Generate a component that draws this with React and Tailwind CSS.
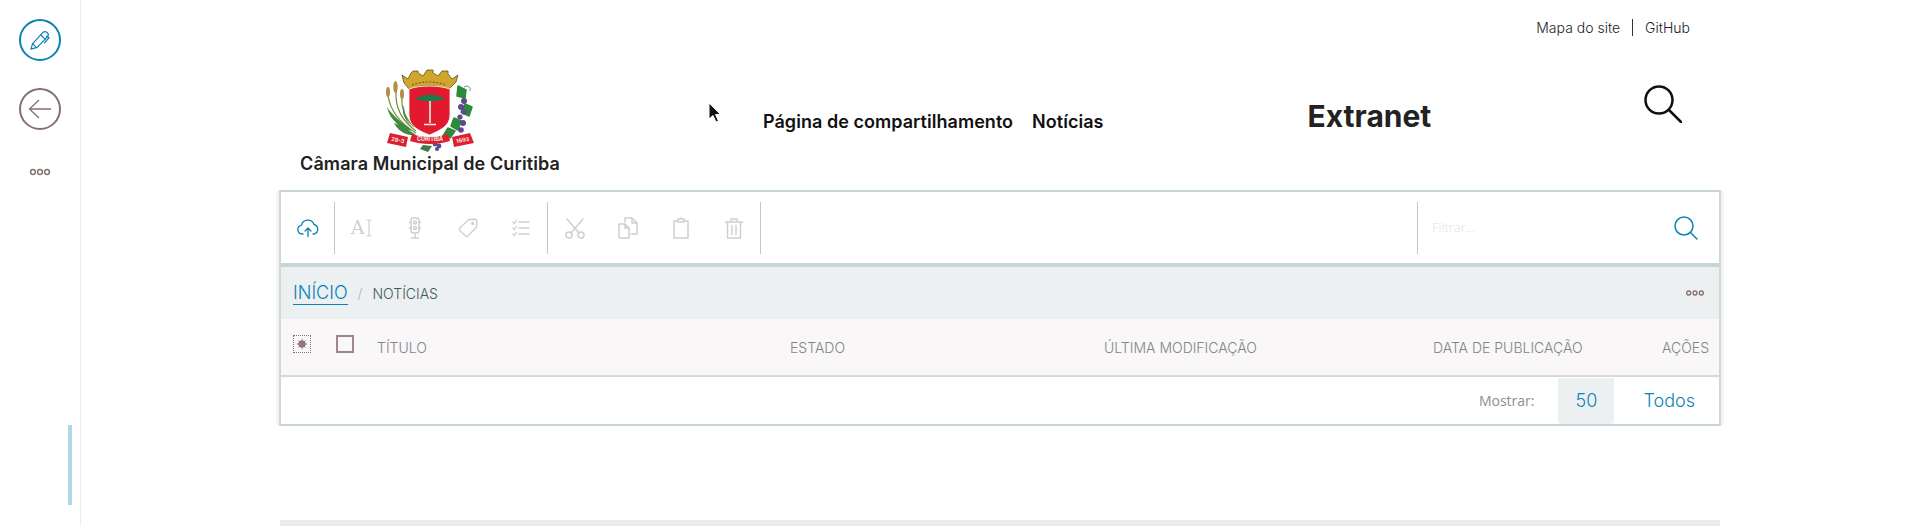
const CINZA = '#cfcfcf';

function Icone({ size = 24, cor = CINZA, sw = 1.5, children, className = '' }) {
  return (
    <svg width={size} height={size} viewBox="0 0 24 24" fill="none" stroke={cor} strokeWidth={sw} strokeLinecap="round" strokeLinejoin="round" className={className}>
      {children}
    </svg>
  );
}

function Pontos({ cor = '#86706f', r = 2.4, w = 20 }) {
  return (
    <svg width={w} height="8" viewBox="0 0 20 8" fill="none" stroke={cor} strokeWidth="1.5">
      <circle cx="3" cy="4" r={r} />
      <circle cx="10" cy="4" r={r} />
      <circle cx="17" cy="4" r={r} />
    </svg>
  );
}

// brasao desenhado a mao, viewBox igual ao recorte de 100x90
function Brasao() {
  return (
    <svg width="100" height="90" viewBox="0 0 100 90">
      {/* trigo */}
      <g stroke="#6f8f3c" strokeWidth="1.2" fill="none">
        <path d="M8 30 C10 46 20 58 36 68" />
        <path d="M16 26 C15 42 22 56 36 66" />
        <path d="M22 32 C21 44 26 54 34 62" />
      </g>
      <g fill="#b08f45">
        <ellipse cx="8" cy="27" rx="2" ry="5" />
        <ellipse cx="15.500" cy="22" rx="2.200" ry="6" />
        <ellipse cx="22" cy="29" rx="2" ry="5" />
      </g>
      <path d="M7 42 C12 50 22 58 33 66 C22 64 10 56 7 42Z M14 58 C20 60 28 64 36 70 C26 71 18 66 14 58Z M24 40 C24 50 28 58 34 64 C28 58 20 50 24 40Z" fill="#3f8a3e" />
      {/* videira */}
      <g fill="#2c8a3c" stroke="#2c8a3c" strokeWidth="1.500" strokeLinejoin="round">
        <path d="M78 21 L86 25 L85 33 L77 31Z" />
        <path d="M85 39 L92 42 L89 51 L81 47Z" />
        <path d="M74 53 L81 56 L78 65 L71 61Z" />
        <path d="M68 63 L75 66 L70 73 L63 71Z" />
      </g>
      <path d="M84 22 C88 20 91 22 90 26" stroke="#2c8a3c" strokeWidth="0.8" fill="none" />
      <g fill="#5b4a8c">
        <circle cx="84" cy="36" r="3" />
        <circle cx="81" cy="42" r="3" />
        <circle cx="84" cy="47" r="2.800" />
        <circle cx="80" cy="52" r="2.600" />
        <circle cx="83" cy="58" r="3" />
        <circle cx="81" cy="65" r="2.800" />
        <circle cx="55" cy="79" r="2.400" />
        <circle cx="59" cy="81" r="2.400" />
        <circle cx="57" cy="84" r="2" />
      </g>
      {/* coroa */}
      <path d="M22 10 L28 14 L31 8 L33 6 L38 6 L38 8 L43 11 L47 5 L53 5 L53 8 L58 11 L62 6 L68 6 L68 9 L72 14 L78 10 L76 17 L68 25 C56 19 40 19 30 25 L24 18Z" fill="#d0a62c" stroke="#5f4f18" strokeWidth="0.800" strokeLinejoin="round" />
      <path d="M32 20 C42 16 56 16 66 20" stroke="#7a6420" strokeWidth="1.200" fill="none" strokeDasharray="2 1.500" />
      {/* escudo */}
      <path d="M29 24 C40 20 58 20 70 24 L70 50 C70 62 58 66 49.500 70 C40 66 29 62 29 50Z" fill="#e2192f" stroke="#fff" strokeWidth="0.800" />
      <path d="M35 35 C40 28 60 28 65 35 C58 34 54 37 50 37 C46 37 42 34 35 35Z" fill="#1c7a4c" />
      <path d="M50 36 V58 M44 59.500 H56" stroke="#f2eee2" strokeWidth="1.600" fill="none" />
      {/* faixas */}
      <path d="M10 68 L28 72 L26 82 L7 78Z M72 72 L90 68 L94 78 L74 82Z" fill="#dc2030" />
      <path d="M32 69 C42 73 58 73 68 69 L70 76 C58 80 42 80 30 76Z" fill="#dc2030" />
      <g fill="#fbe9e9" fontFamily="Inter, sans-serif" fontWeight="700" textAnchor="middle">
        <text x="50" y="76" fontSize="5.500">CURITIBA</text>
        <text x="17.500" y="77" fontSize="5.500" transform="rotate(11 17.500 77)">29-3</text>
        <text x="83" y="77" fontSize="5.500" transform="rotate(-11 83 77)">1693</text>
      </g>
      <path d="M43 80 L52 81 L48 87 L40 84Z" fill="#3f7a4a" />
    </svg>
  );
}

function BotaoFerramenta({ children }) {
  return <div className="flex h-full w-[53px] items-center justify-center">{children}</div>;
}

function Separador() {
  return <div className="h-[52px] w-px bg-[#b9c9cc]" />;
}

export default function App() {
  return (
    <div className="relative flex h-[526px] w-[1920px] overflow-hidden bg-white text-[#222]" style={{ fontFamily: 'Inter, sans-serif' }}>
      {/* barra lateral */}
      <aside className="relative flex h-full w-[81px] shrink-0 flex-col items-center border-r border-[#e8f0f0] pt-[19px]">
        <div className="flex h-[42px] w-[42px] items-center justify-center rounded-full border-2 border-[#0a83b5]">
          <svg width="22" height="22" viewBox="0 0 24 24" fill="none" stroke="#0a83b5" strokeWidth="1.300" strokeLinejoin="round" strokeLinecap="round">
            <path d="M2 22 L4 16 L15 4 C16 3 18 2.500 20 4 C21.500 5.500 21 7.500 20 8.500 L9 20Z" />
            <path d="M13 6.500 L17.500 11 M4 16 L8 20 M19 8 L22 9.500 L17 15" />
          </svg>
        </div>
        <div className="mt-[27px] flex h-[42px] w-[42px] items-center justify-center rounded-full border-2 border-[#86706f]">
          <svg width="24" height="22" viewBox="0 0 24 22" fill="none" stroke="#86706f" strokeWidth="1.300">
            <path d="M11 2 L1.500 11 L11 20 M1.500 11 H23" />
          </svg>
        </div>
        <div className="mt-[38px]">
          <Pontos w={24} />
        </div>
        <div className="absolute left-[68px] top-[425px] h-[80px] w-[4px] bg-[#aed8e8]" />
      </aside>

      {/* conteudo */}
      <main className="ml-[199px] flex w-[1440px] shrink-0 flex-col">
        <div className="flex h-[53px] items-center justify-end pr-[30px] pt-[2px] text-[14px] font-light text-[#222]">
          <span>Mapa do site</span>
          <span className="mx-[12px] h-[17px] w-px bg-[#333]" />
          <span>GitHub</span>
        </div>

        <header className="flex h-[138px] items-start">
          <div className="flex w-[300px] flex-col items-center pt-[12px]">
            <div className="h-[90px] w-[100px]">
              <Brasao />
            </div>
            <span className="mt-[-3px] whitespace-nowrap text-[18px] font-semibold leading-[24px] tracking-[0.1px] text-[#222]">Câmara Municipal de Curitiba</span>
          </div>
          <nav className="ml-[183px] mt-[57px] flex gap-[19px] text-[18px] font-semibold leading-[24px] tracking-[0.04px] text-[#111]">
            <span>Página de compartilhamento</span>
            <span>Notícias</span>
          </nav>
          <h1 className="ml-[204px] mt-[45px] text-[30px] font-bold leading-[36px] text-[#222]">Extranet</h1>
          <div className="ml-[213px] mt-[32px]">
            <svg width="38" height="38" viewBox="0 0 38 38" fill="none" stroke="#111" strokeWidth="2.500" strokeLinecap="round">
              <circle cx="15" cy="15" r="13.500" />
              <path d="M25 25 L37 37" />
            </svg>
          </div>
        </header>

        {/* cartao */}
        <section className="-mx-px border-x-2 border-b-2 border-t-2 border-x-[#d2d6d6] border-b-[#c8d6d9] border-t-[#c8d6d9] shadow-[0_0_6px_rgba(0,0,0,0.15)] [clip-path:inset(0_-10px_0_-10px)]">
          <div className="flex h-[71px] items-center">
            <BotaoFerramenta>
              <Icone cor="#0a83b5" size={24} sw={1.300}>
                <path d="M7 18 H6 A4.500 4.500 0 0 1 5.500 9.100 A6.500 6.500 0 0 1 18 8.500 A5 5 0 0 1 18.500 18 H17" />
                <path d="M12 20.500 V12.500 M9 15 L12 12 L15 15" />
              </Icone>
            </BotaoFerramenta>
            <Separador />
            <BotaoFerramenta>
              <span className="flex items-center gap-[2px]">
                <span className="text-[19px] font-light leading-none text-[#cfcfcf]" style={{ fontFamily: '"DejaVu Serif", serif' }}>A</span>
                <svg width="6" height="18" viewBox="0 0 6 18" fill="none" stroke={CINZA} strokeWidth="1.200"><path d="M0.500 1 H5.500 M3 1 V17 M0.500 17 H5.500" /></svg>
              </span>
            </BotaoFerramenta>
            <BotaoFerramenta>
              <Icone sw={1.500}>
                <rect x="8" y="2" width="8" height="15" rx="2.500" />
                <circle cx="12" cy="6.500" r="1.500" />
                <circle cx="12" cy="12" r="1.500" />
                <path d="M12 17 V22 M8.500 22 H15.500 M6.500 6.500 H8 M6.500 12 H8 M16 6.500 H17.500 M16 12 H17.500" />
              </Icone>
            </BotaoFerramenta>
            <BotaoFerramenta>
              <Icone sw={1.500} size={22}>
                <path d="M3 12 L12 3.500 Q13 2.700 14 2.700 L20 2.500 Q21.500 2.500 21.500 4 L21.300 10 Q21.300 11 20.500 12 L11.500 21 Q10.500 21.800 9.500 21 L3 14.500 Q2.200 13.200 3 12Z" />
                <circle cx="17" cy="7" r="1" fill={CINZA} />
              </Icone>
            </BotaoFerramenta>
            <BotaoFerramenta>
              <Icone sw={1.300}>
                <path d="M10 6 H20 M10 12 H20 M10 18 H20 M4 6 L5.500 7.500 L7.500 4.500 M4 12 L5.500 13.500 L7.500 10.500 M4 18 L5.500 19.500 L7.500 16.500" />
              </Icone>
            </BotaoFerramenta>
            <Separador />
            <BotaoFerramenta>
              <Icone sw={1.500}>
                <circle cx="6" cy="19" r="3" />
                <circle cx="18" cy="19" r="3" />
                <path d="M8 17 L20 3 M16 17 L4 3" />
              </Icone>
            </BotaoFerramenta>
            <BotaoFerramenta>
              <Icone sw={1.500}>
                <path d="M3 8 H9 L13 12 V22 H3Z M9 8 V12 H13" />
                <path d="M9 6 V2 H16 L21 7 V18 H15 M16 2 V7 H21" />
              </Icone>
            </BotaoFerramenta>
            <BotaoFerramenta>
              <Icone sw={1.500}>
                <path d="M9 5 H5 V22 H19 V5 H15 M9 6 V3 H11 L12 2 L13 3 H15 V6Z" />
              </Icone>
            </BotaoFerramenta>
            <BotaoFerramenta>
              <Icone sw={1.500}>
                <path d="M3.500 6 H20.500 M9 6 V3 H15 V6 M5.500 6 V22 H18.500 V6 M10 9.500 V18.500 M14 9.500 V18.500" />
              </Icone>
            </BotaoFerramenta>
            <Separador />
            <div className="flex-1" />
            <Separador />
            <div className="flex h-full w-[301px] items-center justify-between pl-[14px] pr-[21px]">
              <span className="text-[13px] font-light text-[#dfe3e4]" style={{ fontFamily: '"Open Sans", sans-serif' }}>Filtrar...</span>
              <svg width="24" height="24" viewBox="0 0 24 24" fill="none" stroke="#0a83b5" strokeWidth="1.500" strokeLinecap="round">
                <circle cx="10" cy="10" r="9" />
                <path d="M16.500 16.500 L23 23" />
              </svg>
            </div>
          </div>

          <div className="flex h-[56px] items-center justify-between border-t-4 border-[#c8d6d9] bg-[#edf0f1] pl-[12px] pr-[15px]">
            <div className="flex items-center">
              <span className="border-b border-[#0a83b5] text-[18px] font-light leading-[22px] text-[#0a83b5]">INÍCIO</span>
              <span className="ml-[10px] text-[14px] font-light text-[#aab4b5]">/</span>
              <span className="ml-[10px] text-[14px] font-light text-[#3f5a5a]">NOTÍCIAS</span>
            </div>
            <Pontos r={2.200} w={18} />
          </div>

          <div className="relative flex h-[58px] items-center border-b-2 border-[#d5d9d9] bg-[#f9f7f8] text-[14px] font-light text-[#7f8687]">
            <div className="ml-[12px] mt-[-6px] flex h-[18px] w-[18px] items-center justify-center border border-dotted border-[#86706f]">
              <svg width="10" height="10" viewBox="0 0 10 10"><circle cx="5" cy="5" r="2.500" fill="none" stroke="#86706f" strokeWidth="2" /><path d="M5 0 V10 M0 5 H10 M1.500 1.500 L8.500 8.500 M8.500 1.500 L1.500 8.500" stroke="#86706f" strokeWidth="1" /></svg>
            </div>
            <div className="ml-[25px] mt-[-6px] h-[18px] w-[18px] border-2 border-[#9c8889]" />
            <span className="ml-[23px] w-[413px]">TÍTULO</span>
            <span className="w-[314px]">ESTADO</span>
            <span className="w-[329px]">ÚLTIMA MODIFICAÇÃO</span>
            <span className="w-[229px]">DATA DE PUBLICAÇÃO</span>
            <span>AÇÕES</span>
          </div>

          <div className="flex h-[47px] items-center justify-end">
            <span className="text-[14px] text-[#8a8f90]" style={{ fontFamily: '"Open Sans", sans-serif' }}>Mostrar:</span>
            <span className="ml-[24px] flex h-[46px] w-[56px] items-center justify-center rounded-b-[4px] bg-[#edf0f1] text-[18px] font-light text-[#0a83b5]">50</span>
            <span className="ml-[29px] mr-[24px] text-[18px] font-light text-[#0a83b5]">Todos</span>
          </div>
        </section>

        <div className="mt-[94px] h-[6px] shrink-0 bg-[#ebebeb]" />
      </main>

      {/* cursor do mouse */}
      <svg className="absolute left-[708px] top-[102px]" width="14" height="22" viewBox="0 0 14 22">
        <path d="M1 1 L1 17 L5 13.500 L8 20 L10.500 19 L7.500 12.500 L12.500 12.500Z" fill="#111" stroke="#fff" strokeWidth="1" />
      </svg>
    </div>
  );
}
